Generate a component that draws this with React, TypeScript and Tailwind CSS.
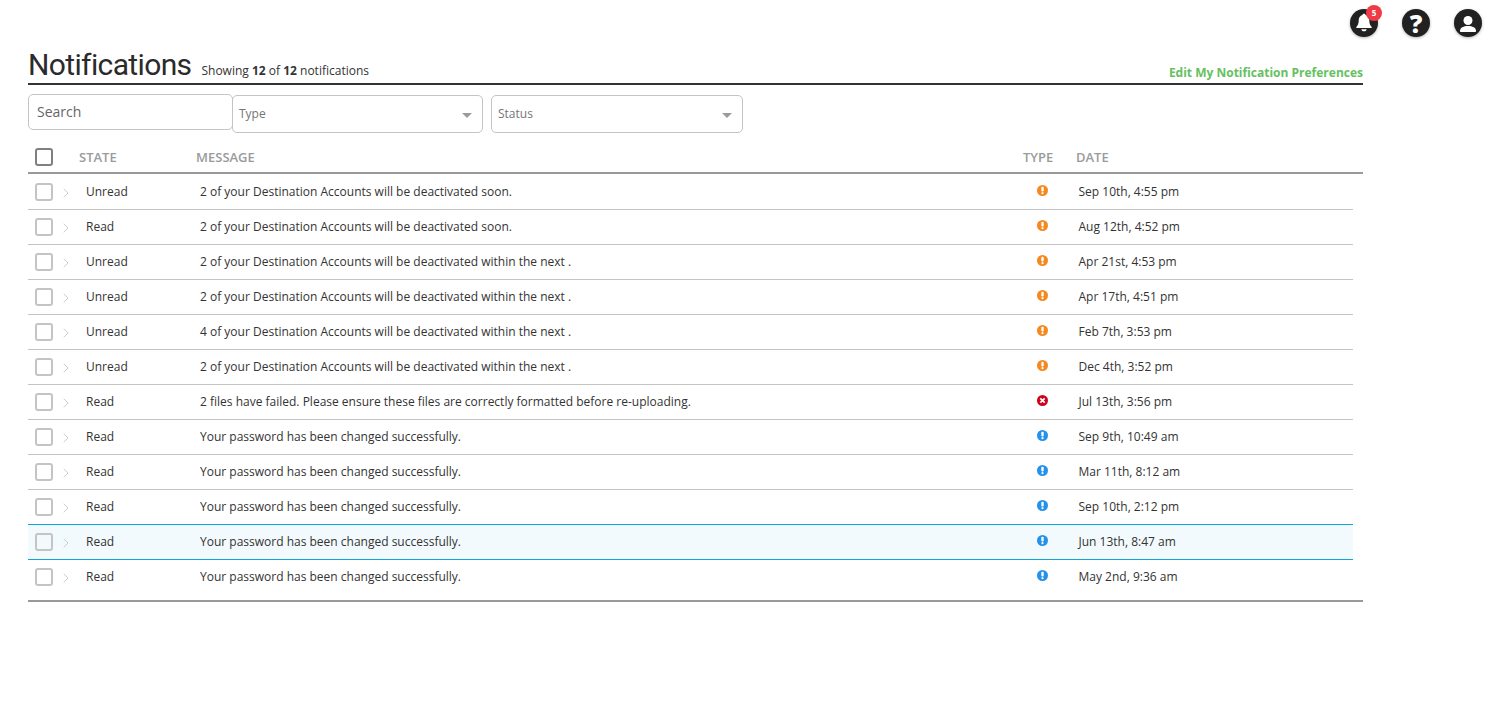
import { ChevronRight } from "lucide-react";

const rows = [
  { state: "Unread", message: "2 of your Destination Accounts will be deactivated soon.", type: "warn", date: "Sep 10th, 4:55 pm" },
  { state: "Read", message: "2 of your Destination Accounts will be deactivated soon.", type: "warn", date: "Aug 12th, 4:52 pm" },
  { state: "Unread", message: "2 of your Destination Accounts will be deactivated within the next .", type: "warn", date: "Apr 21st, 4:53 pm" },
  { state: "Unread", message: "2 of your Destination Accounts will be deactivated within the next .", type: "warn", date: "Apr 17th, 4:51 pm" },
  { state: "Unread", message: "4 of your Destination Accounts will be deactivated within the next .", type: "warn", date: "Feb 7th, 3:53 pm" },
  { state: "Unread", message: "2 of your Destination Accounts will be deactivated within the next .", type: "warn", date: "Dec 4th, 3:52 pm" },
  { state: "Read", message: "2 files have failed. Please ensure these files are correctly formatted before re-uploading.", type: "error", date: "Jul 13th, 3:56 pm" },
  { state: "Read", message: "Your password has been changed successfully.", type: "info", date: "Sep 9th, 10:49 am" },
  { state: "Read", message: "Your password has been changed successfully.", type: "info", date: "Mar 11th, 8:12 am" },
  { state: "Read", message: "Your password has been changed successfully.", type: "info", date: "Sep 10th, 2:12 pm" },
  { state: "Read", message: "Your password has been changed successfully.", type: "info", date: "Jun 13th, 8:47 am", hover: true },
  { state: "Read", message: "Your password has been changed successfully.", type: "info", date: "May 2nd, 9:36 am" },
];

function TypeIcon({ type }: { type: string }) {
  if (type === "error") {
    return (
      <svg width="11" height="11" viewBox="0 0 11 11">
        <circle cx="5.5" cy="5.5" r="5.5" fill="#d0021b" />
        <path d="M3.3 3.3l4.4 4.4M7.7 3.3l-4.4 4.4" stroke="#fff" strokeWidth="1.7" />
      </svg>
    );
  }
  return (
    <svg width="11" height="11" viewBox="0 0 11 11">
      <circle cx="5.5" cy="5.5" r="5.5" fill={type === "warn" ? "#f5881f" : "#2492eb"} />
      <rect x="4.3" y="1.8" width="2.4" height="4.8" rx="1" fill="#fff" />
      <circle cx="5.5" cy="8.2" r="1.1" fill="#fff" />
    </svg>
  );
}

function Select({ label, width }: { label: string; width: string }) {
  return (
    <div className={`flex h-[38px] items-center justify-between rounded-[5px] border border-[#c4c4c4] pl-[6px] pr-[10px] text-[12px] text-[#757575] ${width}`}>
      <span>{label}</span>
      <span className="mt-[2px] h-0 w-0 border-x-[5px] border-t-[5px] border-x-transparent border-t-[#9b9b9b]" />
    </div>
  );
}

function RoundIcon({ children }: { children: React.ReactNode }) {
  return (
    <div className="relative flex h-[28px] w-[28px] items-center justify-center rounded-full bg-[#212121] shadow-[0_1px_3px_rgba(0,0,0,0.3)]">
      {children}
    </div>
  );
}

export default function App() {
  return (
    <div className="min-h-[705px] bg-white font-['Open_Sans',sans-serif] text-[12px] text-[#333]">
      <div className="flex justify-end gap-[24px] pr-[10px] pt-[9px]">
        <RoundIcon>
          <svg width="20" height="22" viewBox="0 0 18 20" fill="#fff">
            <path d="M9 1.5c-.8 0-1.3.5-1.4 1.2C5.3 3.4 4.2 5.3 4.2 7.6c0 3.2-.8 4.8-2.2 6v.9h14v-.9c-1.4-1.2-2.2-2.8-2.2-6 0-2.3-1.1-4.2-3.4-4.9-.1-.7-.6-1.2-1.4-1.2z" />
            <path d="M6.6 15.6h4.8c0 1.1-1 1.9-2.4 1.9s-2.4-.8-2.4-1.9z" />
          </svg>
          <span className="absolute right-[-4px] top-[-4px] flex h-[16px] w-[16px] items-center justify-center rounded-full bg-[#f03a47] text-[8px] font-bold leading-none text-white">
            5
          </span>
        </RoundIcon>
        <RoundIcon>
          <span className="text-[25px] font-extrabold leading-none text-white">?</span>
        </RoundIcon>
        <RoundIcon>
          <svg width="20" height="20" viewBox="0 0 20 20" fill="#fff" className="mt-[1px]">
            <circle cx="10" cy="6.5" r="4.5" />
            <path d="M2 17c0-3.6 3.6-5 8-5s8 1.4 8 5c0 .7-.4 1-1 1H3c-.6 0-1-.3-1-1z" />
          </svg>
        </RoundIcon>
      </div>

      <div className="ml-[28px] w-[1335px]">
        <div className="mt-[10px] flex h-[38px] items-end justify-between border-b-2 border-[#333]">
          <div className="flex items-baseline gap-[10px]">
            <h1 className="font-['Roboto',sans-serif] text-[30px] font-normal leading-[36px] tracking-[-0.63px] text-[#2b2b2b]">Notifications</h1>
            <span>
              Showing <b>12</b> of <b>12</b> notifications
            </span>
          </div>
          <a className="mb-[1px] font-bold text-[#65c15f]">Edit My Notification Preferences</a>
        </div>

        <div className="mt-[9px] flex items-start">
          <div className="flex h-[36px] w-[205px] items-center rounded-[5px] border border-[#c4c4c4] pb-[1px] pl-[8px] text-[14px] text-[#666]">
            Search
          </div>
          <div className="ml-[-1px] mt-[1px] flex gap-[8px]">
            <Select label="Type" width="w-[251px]" />
            <Select label="Status" width="w-[252px]" />
          </div>
        </div>

        <div className="mt-[7px] flex h-[34px] items-center border-b-2 border-[#999] pt-[1px] text-[13px] font-semibold text-[#9b9b9b]">
          <span className="ml-[7px] h-[18px] w-[18px] rounded-[3px] border-2 border-[#808080]" />
          <span className="ml-[26px] mt-[2px] w-[117px]">STATE</span>
          <span className="mt-[2px] flex-1">MESSAGE</span>
          <span className="mt-[2px] w-[53px]">TYPE</span>
          <span className="mt-[2px] w-[287px]">DATE</span>
        </div>

        <div className="w-[1325px]">
          {rows.map((row, i) => (
            <div
              key={i}
              className={`mt-[-1px] flex h-[36px] items-center border-b border-t first:mt-0 first:border-t-transparent ${
                row.hover ? "relative border-[#0ea5d9] bg-[#f2fafd]" : "border-[#c4c4c4]"
              } ${i === rows.length - 1 ? "border-b-transparent" : ""}`}
            >
              <span className="ml-[7px] h-[18px] w-[18px] rounded-[3px] border-2 border-[#c4c4c4]" />
              <ChevronRight className="ml-[5px] mt-[1px] h-[16px] w-[16px] text-[#b5b5b5]" strokeWidth={1} />
              <span className="ml-[12px] w-[114px]">{row.state}</span>
              <span className="flex-1">{row.message}</span>
              <span className="mb-[3px] flex w-[52px] justify-start pl-[10px]">
                <TypeIcon type={row.type} />
              </span>
              <span className="w-[274.5px]">{row.date}</span>
            </div>
          ))}
        </div>

        <div className="mt-[5px] h-[2px] bg-[#999]" />
      </div>
    </div>
  );
}
